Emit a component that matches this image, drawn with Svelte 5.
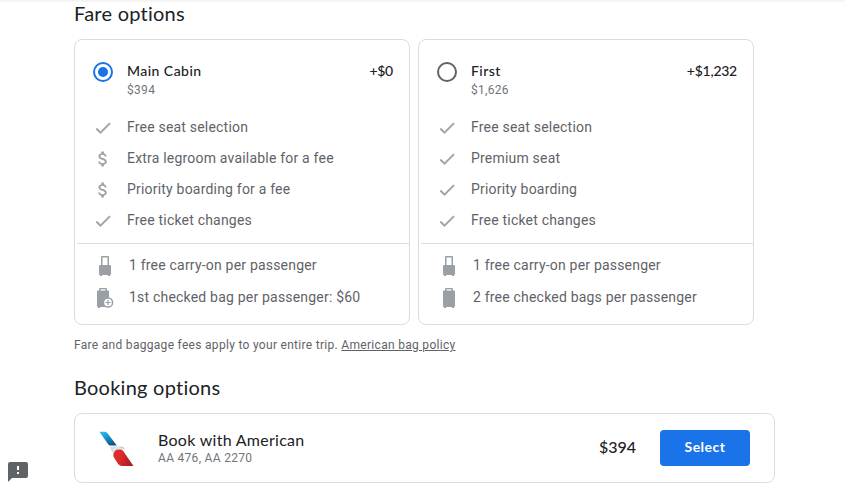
<script lang="ts">
  // === Types ===
  interface Feature {
    icon: 'check' | 'dollar';
    text: string;
  }

  interface Bag {
    icon: 'carryon' | 'checked' | 'checked-fee';
    text: string;
  }

  interface Fare {
    id: string;
    name: string;
    price: string;
    delta: string;
    features: Feature[];
    bags: Bag[];
  }

  const fares: Fare[] = [
    {
      id: 'main',
      name: 'Main Cabin',
      price: '$394',
      delta: '+$0',
      features: [
        { icon: 'check', text: 'Free seat selection' },
        { icon: 'dollar', text: 'Extra legroom available for a fee' },
        { icon: 'dollar', text: 'Priority boarding for a fee' },
        { icon: 'check', text: 'Free ticket changes' },
      ],
      bags: [
        { icon: 'carryon', text: '1 free carry-on per passenger' },
        { icon: 'checked-fee', text: '1st checked bag per passenger: $60' },
      ],
    },
    {
      id: 'first',
      name: 'First',
      price: '$1,626',
      delta: '+$1,232',
      features: [
        { icon: 'check', text: 'Free seat selection' },
        { icon: 'check', text: 'Premium seat' },
        { icon: 'check', text: 'Priority boarding' },
        { icon: 'check', text: 'Free ticket changes' },
      ],
      bags: [
        { icon: 'carryon', text: '1 free carry-on per passenger' },
        { icon: 'checked', text: '2 free checked bags per passenger' },
      ],
    },
  ];

  // === State ===
  let selected = $state('main');

  const selectedPrice = $derived(fares.find(f => f.id === selected)?.price ?? '');
</script>

<div class="page">
  <h2>Fare options</h2>

  <div class="fares" role="radiogroup" aria-label="Fare options">
    {#each fares as fare (fare.id)}
      <div class="fare">
        <button
          class="fare-head"
          role="radio"
          aria-checked={selected === fare.id}
          onclick={() => (selected = fare.id)}
        >
          <span class="radio" class:on={selected === fare.id}></span>
          <span class="fare-title">
            <span class="fare-name">{fare.name}</span>
            <span class="fare-price">{fare.price}</span>
          </span>
          <span class="fare-delta">{fare.delta}</span>
        </button>

        <ul class="features">
          {#each fare.features as feature}
            <li>
              <svg width="20" height="20" viewBox="0 0 24 24" fill="currentColor">
                {#if feature.icon === 'check'}
                  <path d="M9 16.17L4.83 12l-1.42 1.41L9 19 21 7l-1.41-1.41z" stroke="currentColor" stroke-width="0.4" />
                {:else}
                  <path d="M11.8 10.9c-2.27-.59-3-1.2-3-2.15 0-1.09 1.01-1.85 2.7-1.85 1.78 0 2.44.85 2.5 2.1h2.21c-.07-1.72-1.12-3.3-3.21-3.81V3h-3v2.16c-1.94.42-3.5 1.68-3.5 3.61 0 2.31 1.91 3.46 4.7 4.13 2.5.6 3 1.48 3 2.41 0 .69-.49 1.79-2.7 1.79-2.06 0-2.87-.92-2.98-2.1h-2.2c.12 2.19 1.76 3.42 3.68 3.83V21h3v-2.15c1.95-.37 3.5-1.5 3.5-3.55 0-2.84-2.43-3.81-4.7-4.4z" />
                {/if}
              </svg>
              <span>{feature.text}</span>
            </li>
          {/each}
        </ul>

        <ul class="bags">
          {#each fare.bags as bag}
            <li>
              <svg width="24" height="24" viewBox="0 0 24 24" fill="currentColor">
                {#if bag.icon === 'carryon'}
                  <path fill-rule="evenodd" d="M9 2h6a1 1 0 0 1 1 1v8h1a1 1 0 0 1 1 1v8a1 1 0 0 1-1 1v1h-2v-1H9v1H7v-1a1 1 0 0 1-1-1v-8a1 1 0 0 1 1-1h1V3a1 1 0 0 1 1-1zm.5 1.5V11h5V3.5z" />
                {:else if bag.icon === 'checked'}
                  <path fill-rule="evenodd" d="M9 2h6a1 1 0 0 1 1 1v1.500h1a1 1 0 0 1 1 1V20a1 1 0 0 1-1 1v1h-2v-1H9v1H7v-1a1 1 0 0 1-1-1V5.500a1 1 0 0 1 1-1h1V3a1 1 0 0 1 1-1zm.5 1.300v1.200h5V3.300z" />
                {:else}
                  <path fill-rule="evenodd" d="M7 2h6a1 1 0 0 1 1 1v1.500h1a1 1 0 0 1 1 1V20a1 1 0 0 1-1 1H7v1H5v-1a1 1 0 0 1-1-1V5.500a1 1 0 0 1 1-1h1V3a1 1 0 0 1 1-1zm.5 1.300v1.200h5V3.300z" />
                  <circle cx="15" cy="16.500" r="4.600" fill="#fff" stroke="currentColor" stroke-width="1.500" />
                  <path d="M14.400 14h1.200v1.900h1.900v1.200h-1.900V19h-1.200v-1.900h-1.900v-1.200h1.900z" />
                {/if}
              </svg>
              <span>{bag.text}</span>
            </li>
          {/each}
        </ul>
      </div>
    {/each}
  </div>

  <p class="note">Fare and baggage fees apply to your entire trip. <a href="#policy">American bag policy</a></p>

  <h2>Booking options</h2>

  <div class="booking">
    <svg class="logo" width="35" height="35" viewBox="0 0 35 35">
      <defs>
        <linearGradient id="tail-blue" x1="0" y1="0" x2="0.6" y2="1">
          <stop offset="0" stop-color="#2fc4f2" />
          <stop offset="0.5" stop-color="#1595cc" />
          <stop offset="1" stop-color="#12528c" />
        </linearGradient>
        <linearGradient id="tail-red" x1="0" y1="0" x2="1" y2="0.3">
          <stop offset="0.4" stop-color="#e02b2b" />
          <stop offset="1" stop-color="#a91f2a" />
        </linearGradient>
        <linearGradient id="beak" x1="0" y1="0" x2="1" y2="0">
          <stop offset="0" stop-color="#d4dde3" />
          <stop offset="0.6" stop-color="#e3e8eb" />
          <stop offset="1" stop-color="#8b98a1" />
        </linearGradient>
      </defs>
      <path d="M.4.8h4.400c2 0 3.100.6 4.300 2.200l8.700 11.500h-5.900c-1.500 0-2.300-.5-3.100-1.800z" fill="url(#tail-blue)" />
      <path d="M10.900 16.300C13.500 15.200 18 14.900 21 15.500c2.500.4 4.300 1.200 4.800 2.300-3.200-.6-6.500-.2-8.800 1.500-1.400 1.100-2.300 2.500-2.400 4.500z" fill="url(#beak)" />
      <path d="M18.300 18.500h3c1.500 0 2.300.5 3.200 1.900L34.500 35H23c-2 0-3.200-.8-4.200-2.400L15 26.500c-1.700-3 .3-6.800 3.300-8z" fill="url(#tail-red)" />
    </svg>
    <div class="booking-info">
      <span class="booking-title">Book with American</span>
      <span class="booking-flights">AA 476, AA 2270</span>
    </div>
    <span class="booking-price">{selectedPrice}</span>
    <button class="select-btn">Select</button>
  </div>

  <button class="feedback" aria-label="Send feedback">
    <svg width="20" height="20" viewBox="0 0 20 20">
      <path d="M2 0h16a2 2 0 0 1 2 2v12a2 2 0 0 1-2 2H4l-4 4V2a2 2 0 0 1 2-2z" fill="#5f6368" />
      <path d="M9 4h2v4H9zM9 10h2v2H9z" fill="#fff" />
    </svg>
  </button>
</div>

<style>
  :global(body) {
    background: #fff;
    overflow: hidden;
  }

  .page {
    box-sizing: border-box;
    height: 490px;
    padding: 1px 70px 0 74px;
    overflow: hidden;
    background: linear-gradient(#f1f1f1, #fff 3px);
    color: #202124;
    font-family: Roboto, sans-serif;
  }

  h2 {
    margin: 0;
    font-family: Lato, sans-serif;
    font-size: 20px;
    font-weight: 400;
    line-height: 24px;
    letter-spacing: 0.25px;
  }

  ul { list-style: none; margin: 0; padding: 0; }

  button {
    border: none;
    background: none;
    padding: 0;
    color: inherit;
    cursor: pointer;
  }

  /* Fare cards */
  .fares {
    display: flex;
    gap: 8px;
    margin-top: 14px;
  }
  .fare {
    box-sizing: border-box;
    width: 336px;
    height: 286px;
    border: 1px solid #dadce0;
    border-radius: 8px;
    background: #fff;
  }
  .fare-head {
    display: flex;
    align-items: flex-start;
    width: 100%;
    padding: 21px 16px 0 18px;
    text-align: left;
  }
  .radio {
    box-sizing: border-box;
    display: flex;
    align-items: center;
    justify-content: center;
    width: 20px;
    height: 20px;
    margin: 1px 14px 0 0;
    border: 2px solid #5f6368;
    border-radius: 50%;
  }
  .radio.on { border-color: #1a73e8; }
  .radio.on::after {
    content: '';
    width: 10px;
    height: 10px;
    border-radius: 50%;
    background: #1a73e8;
  }
  .fare-title {
    display: flex;
    flex-direction: column;
    flex: 1;
  }
  .fare-name, .fare-delta {
    font-family: Lato, sans-serif;
    font-size: 14px;
    font-weight: 500;
    line-height: 20px;
    letter-spacing: 0.45px;
  }
  .fare-delta { letter-spacing: -0.25px; }
  .fare-price {
    margin-top: 1px;
    font-family: Roboto, sans-serif;
    font-size: 12px;
    line-height: 16px;
    letter-spacing: 0.3px;
    color: #70757a;
  }

  /* Feature and baggage rows */
  .features { padding: 13px 0 8px 18px; }
  li {
    display: flex;
    align-items: center;
    height: 31px;
    font-size: 14px;
    letter-spacing: 0.2px;
    color: #5f6368;
  }
  li svg { flex-shrink: 0; color: #9aa0a6; }
  .features svg { margin: 3px 14px 0 0; }
  .bags {
    margin-left: 2px;
    padding: 5px 0 0 16px;
    border-top: 1px solid #dadce0;
  }
  .bags li { height: 32px; }
  .bags svg { margin: 2px 12px 0 0; }

  .note {
    margin: 12px 0 22px;
    font-size: 12px;
    line-height: 16px;
    letter-spacing: 0.3px;
    color: #5f6368;
  }
  .note a { color: inherit; }

  /* Booking */
  .booking {
    box-sizing: border-box;
    display: flex;
    align-items: center;
    height: 70px;
    margin-top: 14px;
    padding: 0 24px;
    border: 1px solid #dadce0;
    border-radius: 8px;
    background: #fff;
  }
  .logo { margin-right: 24px; }
  .booking-info {
    display: flex;
    flex-direction: column;
    flex: 1;
  }
  .booking-title {
    padding-bottom: 1px;
    font-family: Lato, sans-serif;
    font-size: 16px;
    line-height: 19px;
    letter-spacing: 0.28px;
  }
  .booking-flights {
    font-size: 12px;
    line-height: 16px;
    letter-spacing: 0.3px;
    color: #70757a;
  }
  .booking-price {
    margin-right: 24px;
    padding-bottom: 3px;
    font-family: Lato, sans-serif;
    font-size: 16px;
    font-weight: 500;
  }
  .select-btn {
    width: 90px;
    height: 36px;
    padding-bottom: 3px;
    border-radius: 4px;
    background: #1a73e8;
    color: #fff;
    font-family: Lato, sans-serif;
    font-size: 14px;
    font-weight: 700;
    letter-spacing: 0.5px;
  }
  .select-btn:hover { background: #1b66c9; }

  /* Floats over the page in the corner */
  .feedback {
    position: absolute;
    left: 8px;
    top: 462px;
    width: 20px;
    height: 20px;
    line-height: 0;
  }
</style>
